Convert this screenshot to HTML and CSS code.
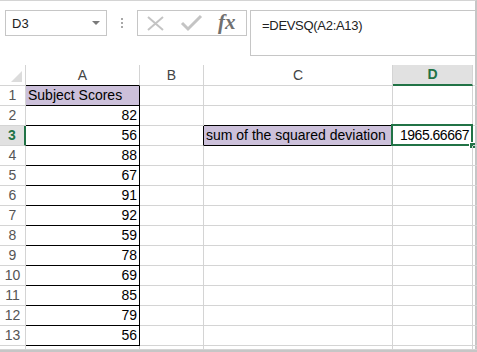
FILE: index.html
```html
<!DOCTYPE html>
<html lang="en">
<head>
    <meta charset="UTF-8">
    <title>DEVSQ</title>
    <link rel="stylesheet" href="styles.css">
</head>
<body>
    <div id="window">
        <div id="formula-bar">
            <div class="name-box">
                <span>D3</span>
                <span class="drop"></span>
            </div>
            <div class="grip"><i></i><i></i><i></i></div>
            <div class="buttons">
                <svg width="110" height="26" viewBox="0 0 110 26">
                    <path d="M11 7 L26 20 M26 7 L11 20" stroke="#c4c4c4" stroke-width="2" fill="none"/>
                    <path d="M45 13 L51 19 L64 6" stroke="#c4c4c4" stroke-width="3" fill="none"/>
                </svg>
                <span class="fx">fx</span>
            </div>
            <div class="formula">=DEVSQ(A2:A13)</div>
        </div>

        <div id="sheet">
            <!-- header row -->
            <div class="c h corner"><span class="tri"></span></div>
            <div class="c h top-b">A</div>
            <div class="c h">B</div>
            <div class="c h">C</div>
            <div class="c h sel-col">D</div>
            <div class="c h e"></div>

            <div class="c rh">1</div>
            <div class="c a fill">Subject Scores</div>
            <div class="c"></div><div class="c"></div><div class="c"></div><div class="c e"></div>

            <div class="c rh">2</div>
            <div class="c a num">82</div>
            <div class="c"></div><div class="c bb"></div><div class="c"></div><div class="c e"></div>

            <div class="c rh sel-row">3</div>
            <div class="c a num">56</div>
            <div class="c br"></div>
            <div class="c a fill">sum of the squared deviation</div>
            <div class="c num active">1965.66667</div>
            <div class="c e"></div>

            <div class="c rh">4</div>
            <div class="c a num">88</div>
            <div class="c"></div><div class="c"></div><div class="c"></div><div class="c e"></div>

            <div class="c rh">5</div>
            <div class="c a num">67</div>
            <div class="c"></div><div class="c"></div><div class="c"></div><div class="c e"></div>

            <div class="c rh">6</div>
            <div class="c a num">91</div>
            <div class="c"></div><div class="c"></div><div class="c"></div><div class="c e"></div>

            <div class="c rh">7</div>
            <div class="c a num">92</div>
            <div class="c"></div><div class="c"></div><div class="c"></div><div class="c e"></div>

            <div class="c rh">8</div>
            <div class="c a num">59</div>
            <div class="c"></div><div class="c"></div><div class="c"></div><div class="c e"></div>

            <div class="c rh">9</div>
            <div class="c a num">78</div>
            <div class="c"></div><div class="c"></div><div class="c"></div><div class="c e"></div>

            <div class="c rh">10</div>
            <div class="c a num">69</div>
            <div class="c"></div><div class="c"></div><div class="c"></div><div class="c e"></div>

            <div class="c rh">11</div>
            <div class="c a num">85</div>
            <div class="c"></div><div class="c"></div><div class="c"></div><div class="c e"></div>

            <div class="c rh">12</div>
            <div class="c a num">79</div>
            <div class="c"></div><div class="c"></div><div class="c"></div><div class="c e"></div>

            <div class="c rh">13</div>
            <div class="c a num">56</div>
            <div class="c"></div><div class="c"></div><div class="c"></div><div class="c e"></div>

            <div class="c rh"></div>
            <div class="c"></div><div class="c"></div><div class="c"></div><div class="c"></div><div class="c e"></div>
        </div>
    </div>
</body>
</html>
```

FILE: styles.css
```css
html, body {
    margin: 0;
    padding: 0;
    background: #ffffff;
}

body {
    width: 477px;
    height: 352px;
    overflow: hidden;
    font-family: "Liberation Sans", Arial, sans-serif;
    color: #000000;
}

#window {
    box-sizing: border-box;
    width: 477px;
    height: 352px;
    border-top: 1px solid #d4d4d4;
    border-right: 2px solid #c6c6c6;
    border-bottom: 2px solid #c6c6c6;
    display: flex;
    flex-direction: column;
}

/* formula bar */
#formula-bar {
    height: 64px;
    box-sizing: border-box;
    padding: 9px 0 0 5px;
    display: flex;
    align-items: flex-start;
}

.name-box {
    box-sizing: border-box;
    width: 102px;
    height: 26px;
    border: 1px solid #c6c6c6;
    display: flex;
    align-items: center;
    padding: 0 0 0 6px;
    font-size: 13px;
    color: #222222;
}

.drop {
    margin-left: auto;
    margin-right: 6px;
    width: 0;
    height: 0;
    border-left: 4px solid transparent;
    border-right: 4px solid transparent;
    border-top: 4px solid #7a7a7a;
}

.grip {
    width: 30px;
    height: 26px;
    display: flex;
    flex-direction: column;
    align-items: center;
    justify-content: center;
    gap: 2px;
}

.grip i {
    display: block;
    width: 2px;
    height: 2px;
    background: #a8a8a8;
}

.buttons {
    position: relative;
    box-sizing: border-box;
    width: 110px;
    height: 26px;
    border: 1px solid #c6c6c6;
}

.buttons svg {
    position: absolute;
    left: -1px;
    top: -1px;
}

.fx {
    position: absolute;
    left: 80px;
    top: 0;
    font-family: "Liberation Serif", "Times New Roman", serif;
    font-style: italic;
    font-weight: bold;
    font-size: 21px;
    line-height: 22px;
    color: #707070;
}

.formula {
    flex: 1;
    margin-left: 3px;
    box-sizing: border-box;
    height: 46px;
    border: 1px solid #c6c6c6;
    border-right: none;
    padding: 7px 0 0 11px;
    font-size: 13px;
    letter-spacing: -0.3px;
    color: #222222;
}

/* grid */
#sheet {
    flex: 1;
    display: grid;
    grid-template-columns: 26px 114px 64px 189px 80px 2px;
    grid-template-rows: 21px repeat(13, 20px) 1fr;
}

.c {
    position: relative;
    box-sizing: border-box;
    border-right: 1px solid #d4d4d4;
    border-bottom: 1px solid #d4d4d4;
    padding: 0 2px;
    font-size: 14px;
    line-height: 19px;
    white-space: nowrap;
}

.c.e {
    border-right: none;
}

.h {
    text-align: center;
    color: #444444;
    line-height: 20px;
}

.corner .tri {
    position: absolute;
    right: 3px;
    bottom: 3px;
    width: 0;
    height: 0;
    border-left: 11px solid transparent;
    border-bottom: 11px solid #dcdcdc;
}

.sel-col {
    background: #e1e1e1;
    color: #217346;
    font-weight: bold;
    border-bottom: 2px solid #217346;
    line-height: 19px;
}

.top-b {
    border-bottom-color: #000000;
}

.rh {
    text-align: center;
    color: #555555;
    padding: 0;
}

.sel-row {
    background: #e1e1e1;
    color: #217346;
    font-weight: bold;
    border-right: 2px solid #217346;
}

.a {
    border-right-color: #000000;
    border-bottom-color: #000000;
}

.fill {
    background: #ccc0da;
}

.num {
    text-align: right;
}

.bb {
    border-bottom-color: #000000;
}

.br {
    border-right-color: #000000;
}

.active {
    letter-spacing: -0.5px;
    padding-right: 3px;
}

.active::before {
    content: "";
    position: absolute;
    left: -2px;
    top: -2px;
    right: -1px;
    bottom: -1px;
    border: 2px solid #217346;
}

.active::after {
    content: "";
    position: absolute;
    right: -3px;
    bottom: -3px;
    width: 5px;
    height: 5px;
    background: #217346;
    border-left: 1px solid #ffffff;
    border-top: 1px solid #ffffff;
}
```
